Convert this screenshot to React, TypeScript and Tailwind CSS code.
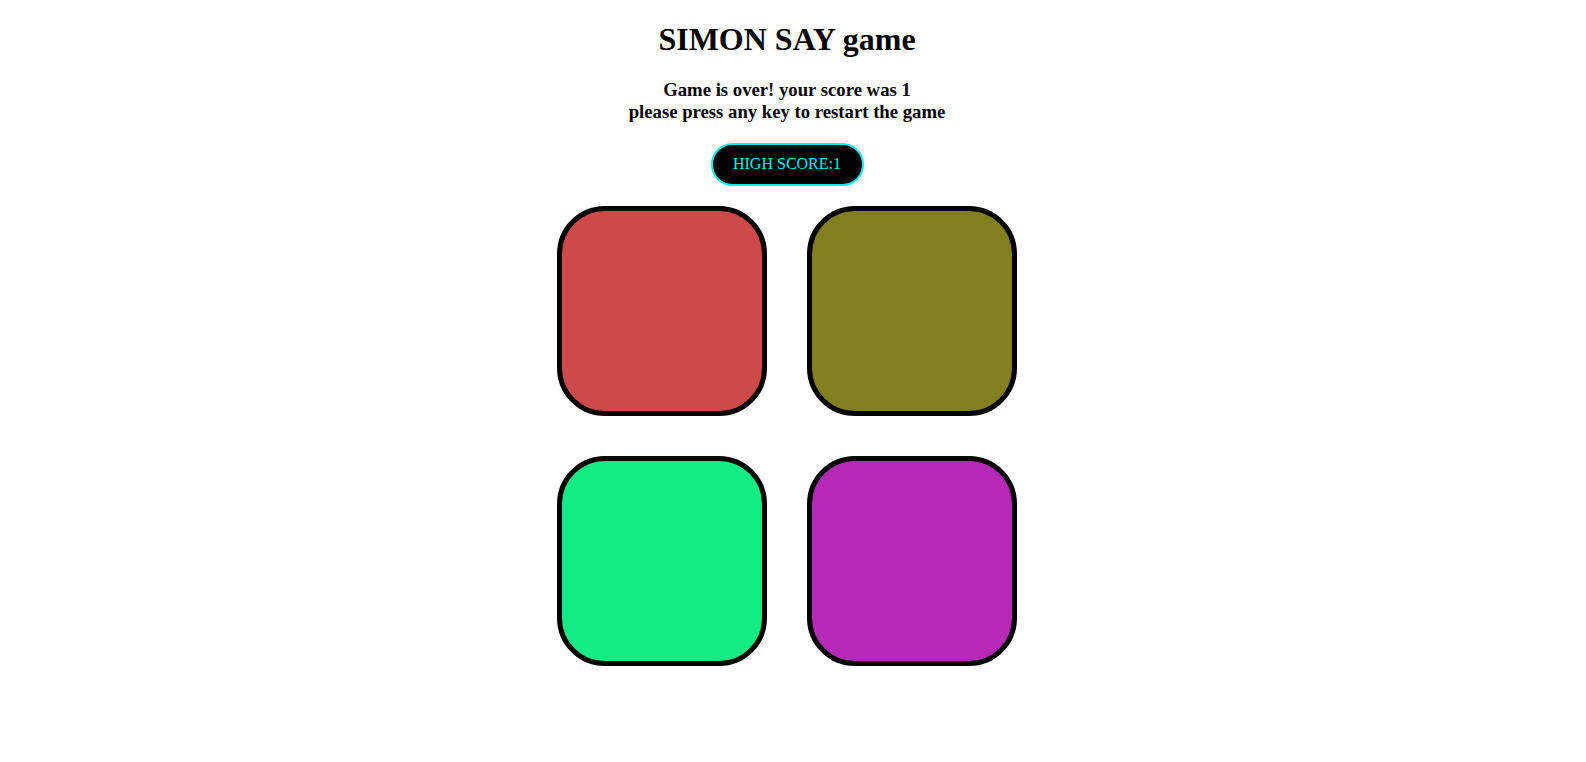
export default function App() {
  const boxes = ["bg-[#ce4a4a]", "bg-[#817f20]", "bg-[#13ec84]", "bg-[#b52ab5]"];

  return (
    <div className="min-h-screen bg-white pr-3 text-center font-['Liberation_Serif','Times_New_Roman',serif] text-black">
      <h1 className="pt-[21px] text-[32px] font-bold leading-[1.15]">SIMON SAY game</h1>
      <h3 className="mt-[21px] text-[18.72px] font-bold leading-[22.5px]">
        Game is over! your score was 1
        <br />
        please press any key to restart the game
      </h3>

      <div className="mt-[19px] flex justify-center">
        <button className="h-[43px] w-[153px] rounded-full border-2 border-[#00f0f0] bg-black text-[16px] text-[#00f0f0]">
          HIGH SCORE:1
        </button>
      </div>

      <div className="mx-auto mt-[20px] grid w-[460px] grid-cols-2 gap-[40px]">
        {boxes.map((bg) => (
          <div
            key={bg}
            className={`h-[210px] w-[210px] rounded-[48px] border-[5px] border-black ${bg}`}
          />
        ))}
      </div>
    </div>
  );
}
